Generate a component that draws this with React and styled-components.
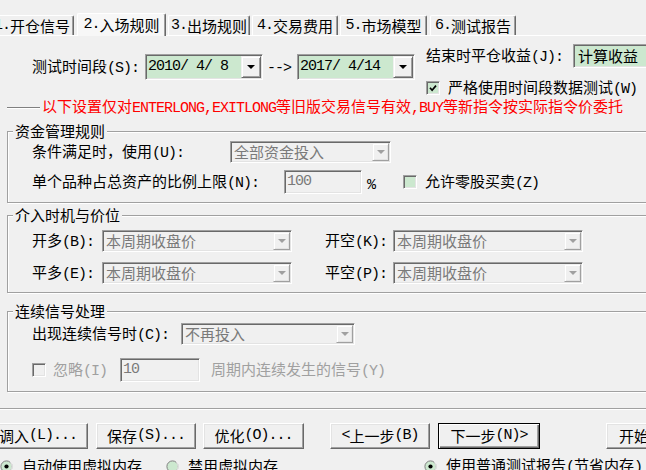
import React from 'react';
import styled, { createGlobalStyle, css } from 'styled-components';

const GlobalStyle = createGlobalStyle`
  html, body { margin: 0; padding: 0; background: #f0f0f0; }
  body { overflow: hidden; }
`;

const GREEN = '#cce8cf';

const Latin = styled.span`
  font-family: "Liberation Mono", monospace;
  letter-spacing: -1px;
`;

const t = (s) =>
  s.split(/([\x20-\x7e]+)/).map((p, i) => (i % 2 ? <Latin key={i}>{p}</Latin> : p));

const Window = styled.div`
  width: 646px;
  height: 470px;
  overflow: hidden;
  background: #f0f0f0;
  font-family: "Noto Sans CJK SC", "Noto Sans", sans-serif;
  font-size: 15px;
  line-height: 16px;
  color: #000;
  display: flex;
  flex-direction: column;
  white-space: nowrap;
`;

/* ---------- tabs ---------- */
const TabStrip = styled.div`
  display: flex;
  align-items: flex-end;
  height: 22px;
  margin: 13px 0 0 -10px;
  flex-shrink: 0;
  position: relative;
  z-index: 1;
`;

const Tab = styled.div`
  box-sizing: border-box;
  flex: none;
  width: ${(p) => p.$w}px;
  margin-left: ${(p) => p.$ml}px;
  height: ${(p) => (p.$active ? 23 : 20)}px;
  margin-bottom: ${(p) => (p.$active ? -1 : 0)}px;
  padding-bottom: ${(p) => (p.$active ? 1 : 0)}px;
  border-top: 1px solid #fff;
  border-left: 1px solid #fff;
  border-right: 1px solid #696969;
  box-shadow: inset -1px 0 #a0a0a0;
  border-radius: 2px 2px 0 0;
  background: ${(p) => (p.$active ? '#f7f7f7' : '#f0f0f0')};
  display: flex;
  align-items: center;
  justify-content: center;
`;

const Panel = styled.div`
  display: flex;
  flex-direction: column;
  border-top: 1px solid #fff;
  flex-shrink: 0;
`;

/* ---------- common controls ---------- */
const sunken = css`
  box-sizing: border-box;
  border-style: solid;
  border-width: 1px;
  border-color: #a0a0a0 #fff #fff #a0a0a0;
  box-shadow: inset 1px 1px #696969, inset -1px -1px #e3e3e3;
  padding: 1px;
`;

const ComboBox = styled.div`
  ${sunken};
  flex: none;
  display: flex;
  align-items: stretch;
  width: ${(p) => p.$w}px;
  height: ${(p) => p.$h}px;
  margin-left: ${(p) => p.$ml || 0}px;
  background: ${(p) => (p.$disabled ? '#f0f0f0' : GREEN)};
  color: ${(p) => (p.$disabled ? '#7a7a7a' : '#000')};
`;

const ComboValue = styled.span`
  flex: 1;
  display: flex;
  align-items: center;
  padding-left: ${(p) => p.$pl}px;
  overflow: hidden;
`;

const DropButton = styled.span`
  box-sizing: border-box;
  flex: none;
  width: ${(p) => p.$bw}px;
  border: 1px solid;
  border-color: ${(p) =>
    p.$disabled ? '#f0f0f0 #a0a0a0 #a0a0a0 #f0f0f0' : '#f0f0f0 #696969 #696969 #f0f0f0'};
  box-shadow: inset 1px 1px #fff, inset -1px -1px ${(p) => (p.$disabled ? '#e3e3e3' : '#a0a0a0')};
  background: #f0f0f0;
  display: flex;
  align-items: center;
  justify-content: center;
`;

const Caret = styled.span`
  width: 0;
  height: 0;
  border-left: 4px solid transparent;
  border-right: 4px solid transparent;
  border-top: 4px solid ${(p) => (p.$disabled ? '#a0a0a0' : '#000')};
`;

function Combo({ w, h = 22, value, disabled, bw = 17, pl = 2, ml, noButton }) {
  return (
    <ComboBox $w={w} $h={h} $disabled={disabled} $ml={ml}>
      <ComboValue $pl={pl}>{t(value)}</ComboValue>
      {!noButton && (
        <DropButton $bw={bw} $disabled={disabled}>
          <Caret $disabled={disabled} />
        </DropButton>
      )}
    </ComboBox>
  );
}

const TextBox = styled.div`
  ${sunken};
  padding: 1px 1px 1px 2px;
  flex: none;
  width: ${(p) => p.$w}px;
  height: 24px;
  margin-left: ${(p) => p.$ml || 0}px;
  background: #f0f0f0;
  color: #7a7a7a;
  display: flex;
  align-items: center;
`;

const CheckBoxBox = styled.span`
  ${sunken};
  padding: 0;
  flex: none;
  width: 14px;
  height: 14px;
  background: ${(p) => (p.$disabled ? '#f0f0f0' : GREEN)};
  display: flex;
  align-items: center;
  justify-content: center;
`;

function CheckBox({ checked, disabled }) {
  return (
    <CheckBoxBox $disabled={disabled}>
      {checked && (
        <svg width="8" height="8" viewBox="0 0 8 8">
          <path d="M1 3.8 L3.1 6.2 L7 1.6" stroke="#000" strokeWidth="1.7" fill="none" />
        </svg>
      )}
    </CheckBoxBox>
  );
}

const Text = styled.span`
  flex: none;
  margin-left: ${(p) => p.$ml || 0}px;
  min-width: ${(p) => p.$min || 0}px;
  color: ${(p) => (p.$disabled ? '#a0a0a0' : 'inherit')};
  align-self: ${(p) => (p.$bottom ? 'flex-end' : 'auto')};
`;

/* ---------- top area ---------- */
const TopArea = styled.div`
  display: flex;
  align-items: flex-start;
  margin-top: 8px;
  flex-shrink: 0;
`;

const DateRow = styled.div`
  display: flex;
  align-items: center;
  height: 26px;
  margin: 10px 0 0 32px;
  flex: none;
`;

const EndColumn = styled.div`
  display: flex;
  flex-direction: column;
  margin-left: 11px;
  flex: none;
`;

const Row = styled.div`
  display: flex;
  align-items: center;
  height: ${(p) => p.$h}px;
  margin-top: ${(p) => p.$mt || 0}px;
  flex: none;
`;

/* ---------- notice ---------- */
const Notice = styled.div`
  display: flex;
  align-items: center;
  height: 16px;
  margin-top: 4px;
  padding-left: 7px;
  flex: none;
`;

const NoticeRule = styled.span`
  width: 33px;
  height: 1px;
  background: #808080;
  box-shadow: 0 1px #fff;
  margin-right: 2px;
  flex: none;
`;

const NoticeText = styled.span`
  color: #ff0000;
`;

/* ---------- group boxes ---------- */
const Group = styled.fieldset`
  margin: ${(p) => p.$mt}px -20px 0 7px;
  padding: 0;
  border: 1px solid #a0a0a0;
  box-shadow: inset 1px 1px #fff, 1px 1px #fff;
  min-width: 0;
  flex-shrink: 0;
`;

const Legend = styled.legend`
  margin-left: 5px;
  padding: 0 2px;
  line-height: 16px;
  background: #f0f0f0;
`;

const GroupBody = styled.div`
  display: flex;
  flex-direction: column;
  padding: ${(p) => p.$pt}px 0 ${(p) => p.$pb}px 24px;
`;

/* ---------- bottom ---------- */
const Separator = styled.div`
  height: 1px;
  background: #a0a0a0;
  border-bottom: 1px solid #fff;
  margin-top: 16px;
  flex: none;
`;

const ButtonRow = styled.div`
  display: flex;
  height: 26px;
  margin: 13px 0 0 -12px;
  flex: none;
`;

const Button = styled.button`
  box-sizing: border-box;
  flex: none;
  width: ${(p) => p.$w}px;
  height: 26px;
  margin: 0 0 0 ${(p) => p.$ml}px;
  padding: 0;
  font: inherit;
  color: #000;
  background: #f0f0f0;
  display: flex;
  align-items: center;
  justify-content: center;
  ${(p) =>
    p.$default
      ? css`
          border: 1px solid #000;
          box-shadow: inset 1px 1px #fff, inset -1px -1px #696969, inset -2px -2px #a0a0a0;
        `
      : css`
          border: 1px solid;
          border-color: #fff #696969 #696969 #fff;
          box-shadow: inset -1px -1px #a0a0a0, inset 1px 1px #e3e3e3;
        `}
`;

const RadioRow = styled.div`
  display: flex;
  align-items: center;
  height: 16px;
  margin-top: 9px;
  flex: none;
`;

const RadioMark = styled.svg`
  flex: none;
  margin-left: ${(p) => p.$ml}px;
`;

function Radio({ checked, ml }) {
  return (
    <RadioMark $ml={ml} width="13" height="13" viewBox="0 0 13 13">
      <circle cx="6.5" cy="6.5" r="5.6" fill={GREEN} stroke="#808080" strokeWidth="1" />
      <path d="M2.5 10.5 A5.6 5.6 0 0 0 10.5 2.5" fill="none" stroke="#fff" strokeWidth="1" />
      {checked && <circle cx="6.5" cy="6.5" r="2.1" fill="#000" />}
    </RadioMark>
  );
}

const tabs = [
  { label: '1.开仓信号', w: 84, ml: 0 },
  { label: '2.入场规则', w: 89, ml: 3, active: true },
  { label: '3.出场规则', w: 82, ml: 2 },
  { label: '4.交易费用', w: 86, ml: 2 },
  { label: '5.市场模型', w: 87, ml: 2 },
  { label: '6.测试报告', w: 86, ml: 3 },
];

const buttons = [
  { label: '调入(L)...', w: 100, ml: 0 },
  { label: '保存(S)...', w: 100, ml: 8 },
  { label: '优化(O)...', w: 101, ml: 7 },
  { label: '<上一步(B)', w: 100, ml: 26 },
  { label: '下一步(N)>', w: 102, ml: 8, def: true },
  { label: '开始测试(T)', w: 110, ml: 66 },
];

export default function App() {
  return (
    <>
      <GlobalStyle />
      <Window>
        <TabStrip>
          {tabs.map((tb) => (
            <Tab key={tb.label} $w={tb.w} $ml={tb.ml} $active={tb.active}>
              {t(tb.label)}
            </Tab>
          ))}
        </TabStrip>

        <Panel>
          <TopArea>
            <DateRow>
              <Text>{t('测试时间段(S):')}</Text>
              <Combo w={118} h={26} value="2010/ 4/ 8" bw={20} pl={1} ml={6} />
              <Text $ml={4}>{t('-->')}</Text>
              <Combo w={118} h={26} value="2017/ 4/14" bw={20} pl={1} ml={6} />
            </DateRow>
            <EndColumn>
              <Row $h={24}>
                <Text>{t('结束时平仓收益(J):')}</Text>
                <Combo w={110} h={24} value="计算收益" pl={3} ml={10} noButton />
              </Row>
              <Row $h={14} $mt={13}>
                <CheckBox checked />
                <Text $ml={8}>{t('严格使用时间段数据测试(W)')}</Text>
              </Row>
            </EndColumn>
          </TopArea>

          <Notice>
            <NoticeRule />
            <NoticeText>
              {t('以下设置仅对ENTERLONG,EXITLONG等旧版交易信号有效,BUY等新指令按实际指令价委托')}
            </NoticeText>
          </Notice>

          <Group $mt={8}>
            <Legend>资金管理规则</Legend>
            <GroupBody $pt={2} $pb={8}>
              <Row $h={22}>
                <Text $min={198}>{t('条件满足时，使用(U):')}</Text>
                <Combo w={161} value="全部资金投入" disabled />
              </Row>
              <Row $h={24} $mt={7}>
                <Text $min={252}>{t('单个品种占总资产的比例上限(N):')}</Text>
                <TextBox $w={78}>{t('100')}</TextBox>
                <Text $ml={5} $bottom>{t('%')}</Text>
                <Text $ml={28} />
                <CheckBox />
                <Text $ml={8}>{t('允许零股买卖(Z)')}</Text>
              </Row>
            </GroupBody>
          </Group>

          <Group $mt={4}>
            <Legend>介入时机与价位</Legend>
            <GroupBody $pt={7} $pb={8}>
              <Row $h={22}>
                <Text $min={70}>{t('开多(B):')}</Text>
                <Combo w={190} value="本周期收盘价" disabled />
                <Text $ml={33} $min={68}>{t('开空(K):')}</Text>
                <Combo w={190} value="本周期收盘价" disabled />
              </Row>
              <Row $h={22} $mt={10}>
                <Text $min={70}>{t('平多(E):')}</Text>
                <Combo w={190} value="本周期收盘价" disabled />
                <Text $ml={33} $min={68}>{t('平空(P):')}</Text>
                <Combo w={190} value="本周期收盘价" disabled />
              </Row>
            </GroupBody>
          </Group>

          <Group $mt={10}>
            <Legend>连续信号处理</Legend>
            <GroupBody $pt={4} $pb={9}>
              <Row $h={22}>
                <Text $min={149}>{t('出现连续信号时(C):')}</Text>
                <Combo w={174} value="不再投入" disabled />
              </Row>
              <Row $h={24} $mt={13}>
                <CheckBox disabled />
                <Text $ml={7} $disabled>{t('忽略(I)')}</Text>
                <TextBox $w={80} $ml={13}>{t('10')}</TextBox>
                <Text $ml={11} $disabled>{t('周期内连续发生的信号(Y)')}</Text>
              </Row>
            </GroupBody>
          </Group>
        </Panel>

        <Separator />

        <ButtonRow>
          {buttons.map((b) => (
            <Button key={b.label} $w={b.w} $ml={b.ml} $default={b.def}>
              {t(b.label)}
            </Button>
          ))}
        </ButtonRow>

        <RadioRow>
          <Radio checked ml={0} />
          <Text $ml={9}>自动使用虚拟内存</Text>
          <Radio ml={24} />
          <Text $ml={9}>禁用虚拟内存</Text>
          <Radio checked ml={146} />
          <Text $ml={9}>{t('使用普通测试报告(节省内存)')}</Text>
        </RadioRow>
      </Window>
    </>
  );
}
